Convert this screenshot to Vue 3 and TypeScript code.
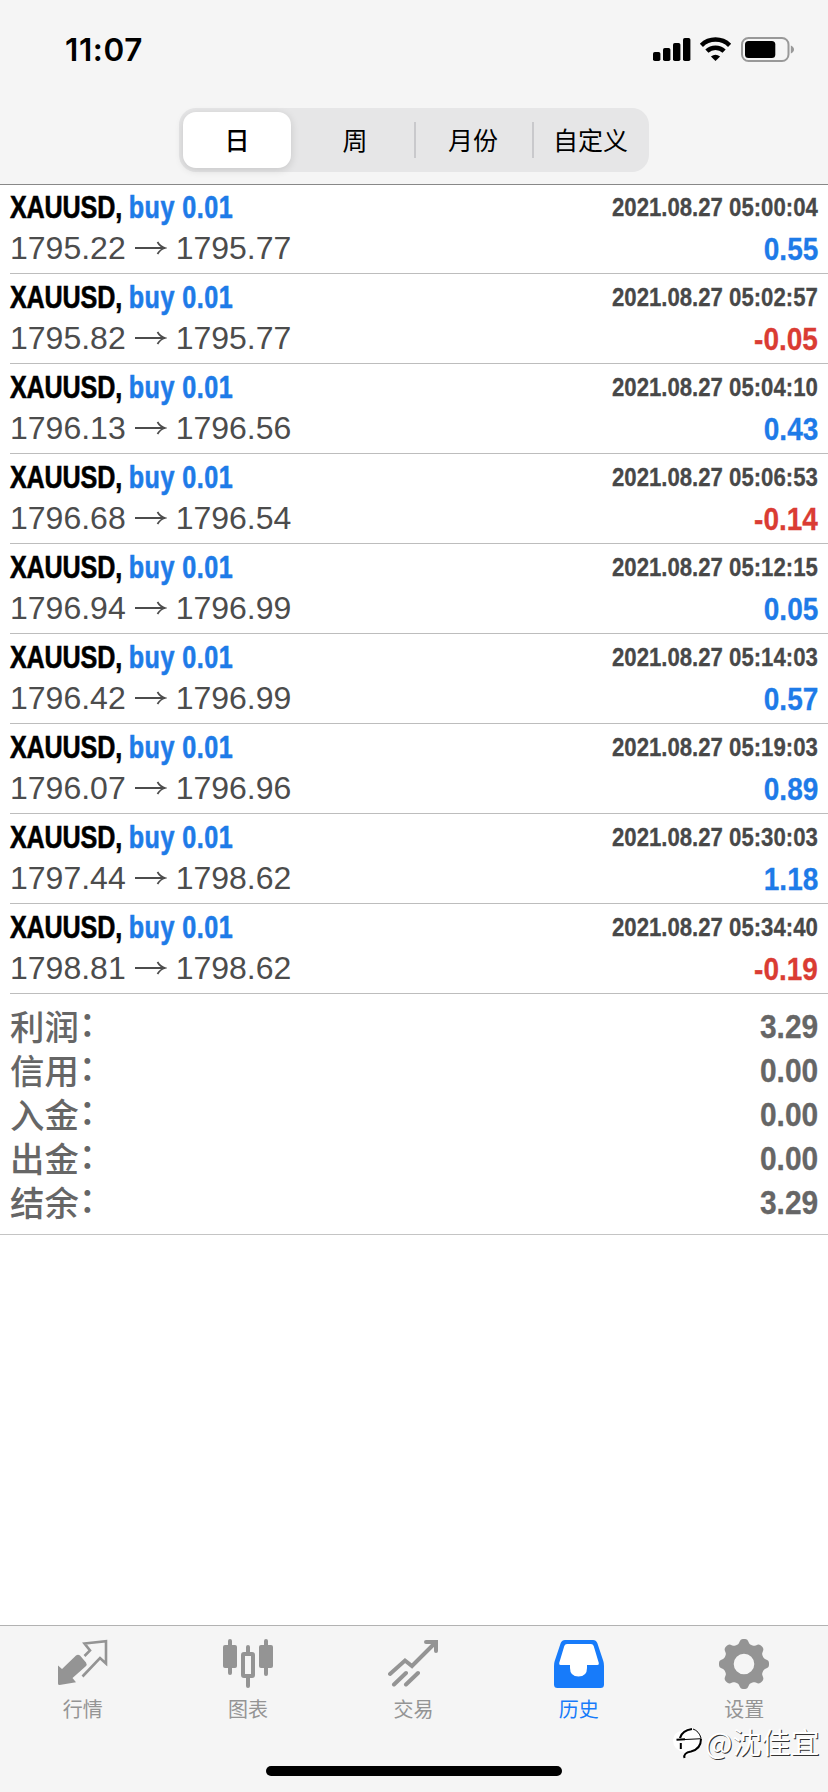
<script setup lang="ts">
interface Deal { from: string; to: string; time: string; profit: string }

const segments: string[] = ['日', '周', '月份', '自定义']

const deals: Deal[] = [
  { from: '1795.22', to: '1795.77', time: '05:00:04', profit: '0.55' },
  { from: '1795.82', to: '1795.77', time: '05:02:57', profit: '-0.05' },
  { from: '1796.13', to: '1796.56', time: '05:04:10', profit: '0.43' },
  { from: '1796.68', to: '1796.54', time: '05:06:53', profit: '-0.14' },
  { from: '1796.94', to: '1796.99', time: '05:12:15', profit: '0.05' },
  { from: '1796.42', to: '1796.99', time: '05:14:03', profit: '0.57' },
  { from: '1796.07', to: '1796.96', time: '05:19:03', profit: '0.89' },
  { from: '1797.44', to: '1798.62', time: '05:30:03', profit: '1.18' },
  { from: '1798.81', to: '1798.62', time: '05:34:40', profit: '-0.19' },
]

const totals: [string, string][] = [
  ['利润', '3.29'],
  ['信用', '0.00'],
  ['入金', '0.00'],
  ['出金', '0.00'],
  ['结余', '3.29'],
]

// Eight-lobed gear outline centred on (25, 25).
const gear = (() => {
  const pts: string[] = []
  for (let i = 0; i <= 144; i++) {
    const a = (i / 144) * Math.PI * 2
    const r = 22.7 + 2.5 * Math.tanh(1.7 * Math.cos(8 * a))
    pts.push(`${(25 + r * Math.cos(a)).toFixed(2)} ${(25 + r * Math.sin(a)).toFixed(2)}`)
  }
  return `M${pts.join('L')}ZM25 14.7a10.3 10.3 0 1 0 0 20.6a10.3 10.3 0 1 0 0-20.6Z`
})()
</script>

<template>
  <div class="screen">
    <header class="top">
      <div class="status">
        <span class="clock">11:07</span>
        <svg class="indicators" width="142" height="26" viewBox="0 0 142 26">
          <rect x="0" y="15" width="7.4" height="9" rx="1.8" />
          <rect x="10" y="11" width="7.4" height="13" rx="1.8" />
          <rect x="20" y="6" width="7.4" height="18" rx="1.8" />
          <rect x="30" y="1" width="7.4" height="23" rx="1.8" />
          <g fill="none" stroke="#000" stroke-width="4.5">
            <path d="M48.4 8.3a20.3 20.3 0 0 1 28.2 0" />
            <path d="M53.9 14.2a12.3 12.3 0 0 1 17.2 0" />
          </g>
          <path d="M62.5 24l-4.6-4.5q4.6-3.5 9.2 0z" />
          <rect x="89" y="1" width="46.5" height="23" rx="6.5" fill="none" stroke="#999" stroke-width="2" />
          <rect x="92" y="4" width="30.3" height="17" rx="3.5" />
          <path d="M137.8 8.5q3.2 1.4 3.2 4t-3.2 4z" fill="#999" />
        </svg>
      </div>
      <nav class="segments">
        <span v-for="(s, i) in segments" :key="s" class="segment" :class="{ on: i === 0, next: i === 1, ruled: i > 1 }">{{ s }}</span>
      </nav>
    </header>

    <main class="content">
      <section v-for="d in deals" :key="d.time" class="deal">
        <div class="line">
          <div class="title">XAUUSD, <span class="blue">buy 0.01</span></div>
          <div class="time">2021.08.27 {{ d.time }}</div>
        </div>
        <div class="line second">
          <div class="prices">
            <span>{{ d.from }}</span>
            <svg class="arrow" width="32" height="34" viewBox="0 0 32 34"><path d="M0 17H30M22.5 11q2.5 4.5 7.5 6q-5 1.5-7.5 6" /></svg>
            <span>{{ d.to }}</span>
          </div>
          <div class="profit" :class="d.profit.startsWith('-') ? 'red' : 'blue'">{{ d.profit }}</div>
        </div>
      </section>
      <section class="totals">
        <div v-for="[k, v] in totals" :key="k" class="total">
          <span class="label">{{ k }}<span class="colon">：</span></span>
          <span class="sum">{{ v }}</span>
        </div>
      </section>
    </main>

    <footer class="tabs">
      <div class="tab">
        <svg width="50" height="50" viewBox="0 0 50 50">
          <path d="M0 26.5L4 30L18 16.5Q20 15 22 16.5L28 23.5Q29.5 25.5 27.5 27.5L14.5 39L18 43.3L1.5 46Q0 46 0 44.5Z" />
          <path d="M26.5 17L32 11.5L26.5 4.5L48 2.3V24.5L42 19L24.5 37.5" fill="none" stroke="currentColor" stroke-width="2.6" />
        </svg>
        <span>行情</span>
      </div>
      <div class="tab">
        <svg width="50" height="50" viewBox="0 0 50 50">
          <rect x="5" y="0" width="4" height="36" rx="2" /><rect x="0" y="6" width="14" height="23" rx="2" />
          <rect x="41" y="0" width="4" height="37" rx="2" /><rect x="36" y="6" width="14" height="23" rx="2" />
          <rect x="23" y="6" width="4" height="9" rx="2" /><rect x="23" y="37" width="4" height="12" rx="2" />
          <rect x="20" y="15" width="10" height="22" rx="1" fill="none" stroke="currentColor" stroke-width="4" />
        </svg>
        <span>图表</span>
      </div>
      <div class="tab">
        <svg width="50" height="50" viewBox="0 0 50 50">
          <path d="M2 35L17 21.5L24 27L47 4M38 3H48V12M6 45.5L18 34M18 45.5L30 34" fill="none" stroke="currentColor" stroke-width="4" stroke-linecap="round" />
        </svg>
        <span>交易</span>
      </div>
      <div class="tab current">
        <svg width="50" height="50" viewBox="0 0 50 50">
          <path fill="#fff" d="M11 3H39L47 26L33 34L25 40L16 34L3 26Z" />
          <path fill-rule="evenodd" d="M11 1H39Q42 1 43.3 4L49.3 22Q50 24 50 27V45.5Q50 49 46.5 49H3.5Q0 49 0 45.5V27Q0 24 .7 22L6.7 4Q8 1 11 1ZM13 5Q11 5 10.3 7L5.2 24Q4.8 26 6.5 26H16V29Q16 37.5 24.5 37.5T33 29V26H43.5Q45.2 26 44.8 24L39.7 7Q39 5 37 5Z" />
        </svg>
        <span>历史</span>
      </div>
      <div class="tab">
        <svg width="50" height="50" viewBox="0 0 50 50"><path fill-rule="evenodd" :d="gear" /></svg>
        <span>设置</span>
      </div>
      <div class="home"></div>
      <div class="mark">
        <svg width="32" height="36" viewBox="0 0 32 36">
          <path d="M0 17Q1 9 8 8Q14 3 22 6Q30 10 29 18Q28 27 19 30L12 34L11 29Q0 27 0 17Z" fill="#fff" />
          <g fill="none" stroke="#000">
            <path d="M7 15Q9 7.5 19 6" stroke-width="2.2" />
            <path d="M20 6Q26 8 28 15M12 16.5L28.5 15.7" stroke-width="1" />
            <path d="M3.5 16.7L12 16.2M7.8 20V26" stroke-width="2" />
            <path d="M28 16Q28 26 18 28.5Q10 30 11.5 35" stroke-width="2" />
          </g>
        </svg>
        <span>@沈佳宜</span>
      </div>
    </footer>
  </div>
</template>

<style>
body { margin: 0; background: #fff; }
</style>

<style scoped>
.screen {
  width: 828px;
  height: 1792px;
  display: flex;
  flex-direction: column;
  background: #fff;
  overflow: hidden;
  color: #000;
  font-family: "Liberation Sans", "Noto Sans CJK SC", sans-serif;
}
.top { box-sizing: border-box; height: 185px; background: #f5f5f5; border-bottom: 1px solid #888; flex: none; }
.status { height: 108px; box-sizing: border-box; padding: 33px 18px 0 65px; display: flex; justify-content: space-between; align-items: flex-start; }
.clock { font: 600 31.5px/34px Inter, sans-serif; letter-spacing: .6px; }
.indicators { margin-top: 4px; margin-right: 15px; }
.segments {
  box-sizing: border-box;
  width: 470px;
  height: 64px;
  margin-left: 179px;
  padding: 4px 0 4px 4px;
  display: grid;
  grid-template-columns: 108px 123px 118px 117px;
  border-radius: 17px;
  background: #e6e6e7;
}
.segment { display: flex; align-items: center; justify-content: center; box-sizing: border-box; height: 56px; padding-bottom: 2px; font: 400 25px/54px "Noto Sans CJK SC", sans-serif; }
.segment.on { background: #fff; border-radius: 13px; font-weight: 500; box-shadow: 0 2px 8px rgba(0, 0, 0, .14); }
.segment.next { padding-left: 5px; }
.segment.ruled { background: linear-gradient(#c9c9cc, #c9c9cc) left center / 2px 36px no-repeat; }
.deal { box-sizing: border-box; height: 90px; margin-left: 10px; padding: 6px 10px 0 0; border-bottom: 1px solid #bdbdbd; }
.deal:first-child { height: 89px; padding-top: 5px; }
.line { display: flex; justify-content: space-between; height: 34px; line-height: 34px; white-space: nowrap; }
.second { margin-top: 7px; }
.title { font-weight: 700; font-size: 32px; letter-spacing: -.2px; transform: scaleX(.785); transform-origin: left; -webkit-text-stroke: .6px; }
.title .blue { letter-spacing: .6px; }
.time { font-weight: 700; font-size: 25.5px; color: #484848; transform: scaleX(.869); transform-origin: right; -webkit-text-stroke: .3px; }
.prices { display: flex; font-size: 32px; color: #4c4c4c; }
.arrow { margin: 0 9px 0 9px; fill: none; stroke: #4c4c4c; stroke-width: 1.8; }
.profit { font-weight: 700; font-size: 32px; line-height: 36px; transform: scaleX(.875); transform-origin: right; -webkit-text-stroke: .3px; }
.blue { color: #1e7be8; }
.red { color: #da3c33; }
.totals { box-sizing: border-box; height: 241px; padding: 10px 10px 0; border-bottom: 1px solid #c4c4c4; }
.total { height: 44px; display: flex; justify-content: space-between; color: #666; }
.label { display: flex; font: 500 34.4px/42px "Noto Sans CJK SC", sans-serif; }
.colon { line-height: 34px; }
.sum { font-weight: 700; font-size: 34px; line-height: 44px; transform: scaleX(.88); transform-origin: right; -webkit-text-stroke: .3px; }
.tabs {
  position: relative;
  box-sizing: border-box;
  height: 167px;
  margin-top: auto;
  padding-top: 13px;
  display: grid;
  grid-template-columns: repeat(5, 165.4px);
  background: #f5f5f5;
  border-top: 1px solid #b2b2b2;
}
.tab { display: flex; flex-direction: column; align-items: center; color: #949494; font: 400 20px/28px "Noto Sans CJK SC", sans-serif; }
.tab svg { fill: currentColor; margin-bottom: 6px; }
.current { color: #177bfa; }
.home { position: absolute; left: 266px; top: 140px; width: 296px; height: 10px; border-radius: 5px; background: #000; }
.mark { position: absolute; left: 673px; top: 95px; display: flex; align-items: center; color: #fff; font: 400 29px/40px "Noto Sans CJK SC", sans-serif; text-shadow: 1px 1px 0 #333; white-space: nowrap; }
</style>
